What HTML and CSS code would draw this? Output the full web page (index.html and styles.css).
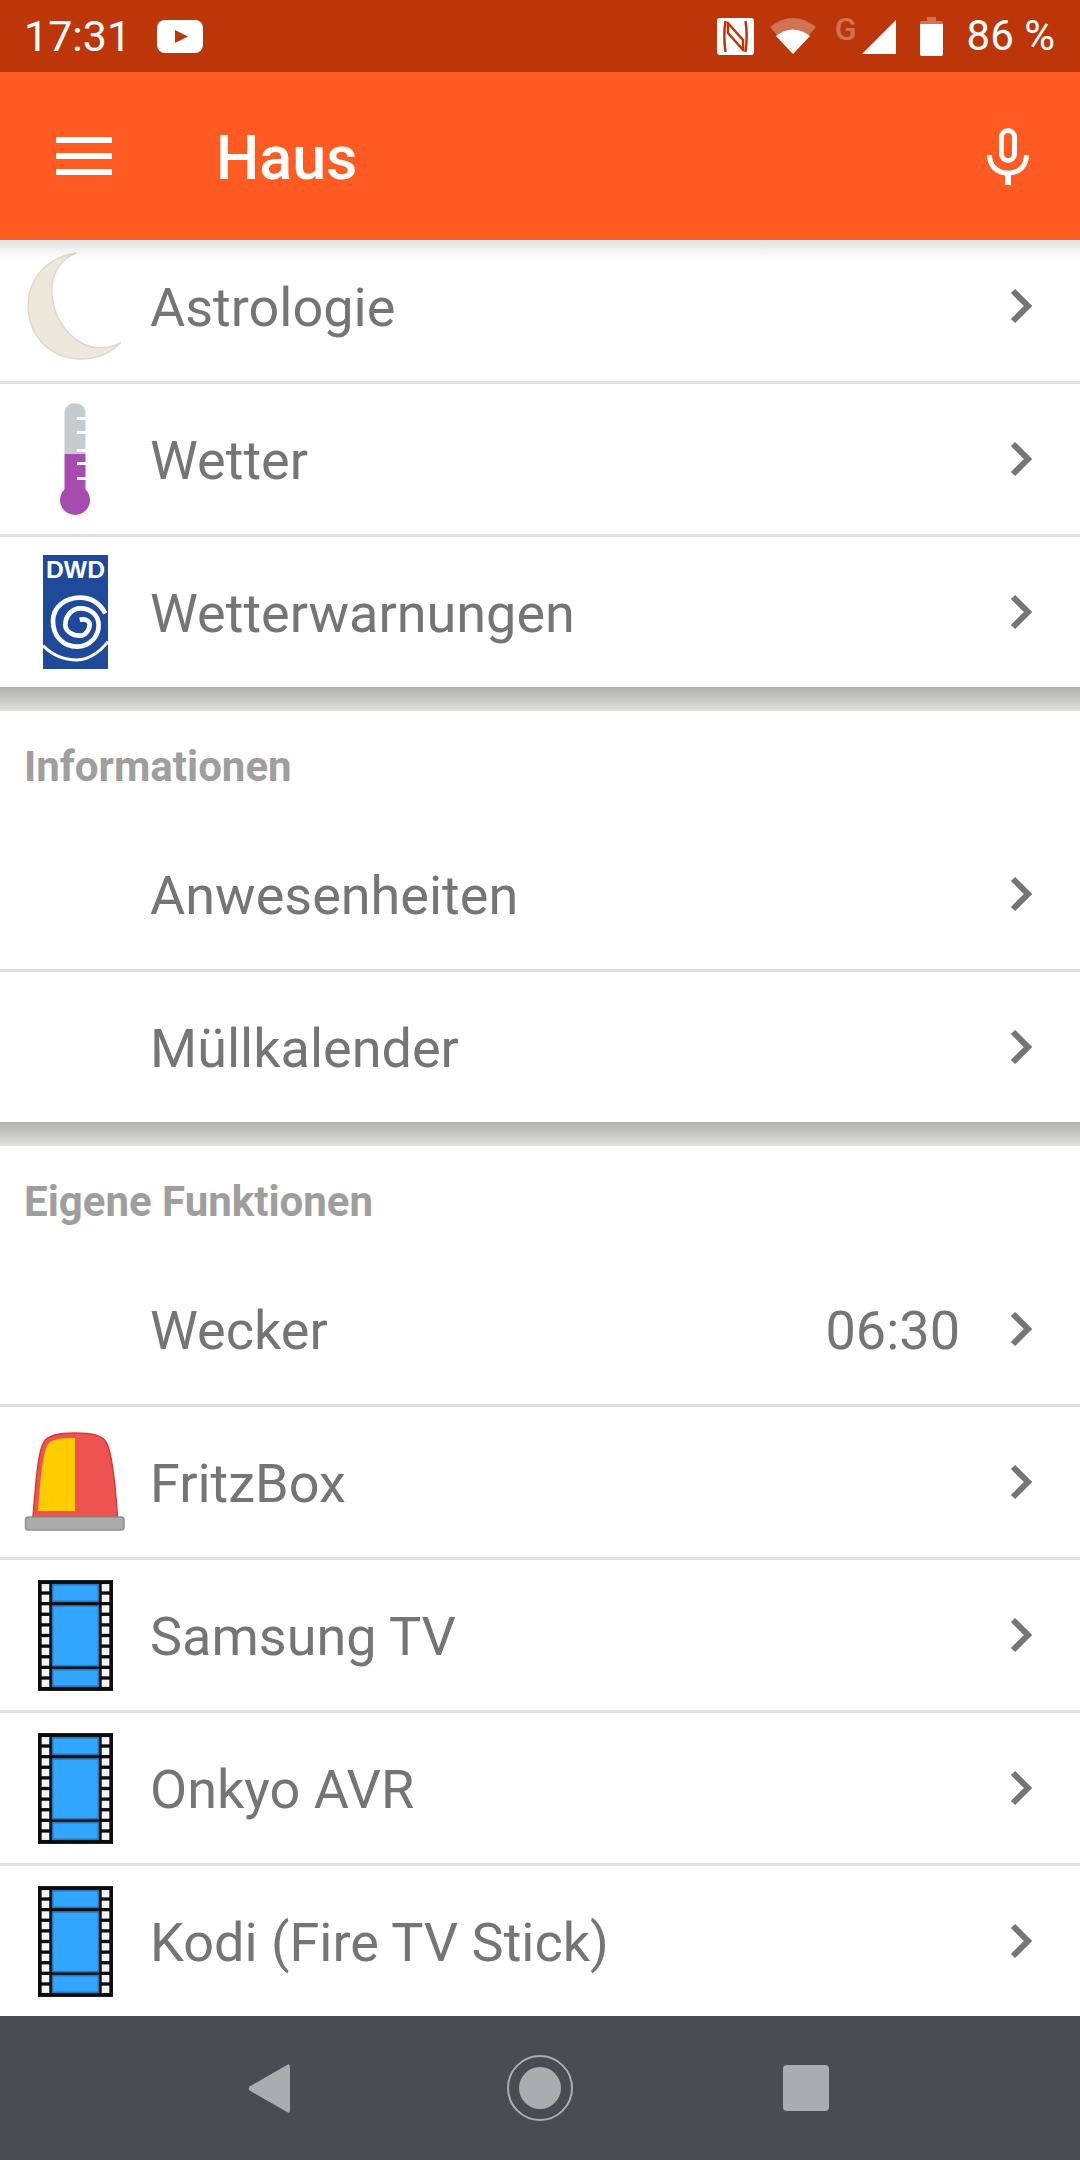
FILE: index.html
```html
<!DOCTYPE html>
<html lang="de">
<head>
    <meta charset="UTF-8">
    <meta name="viewport" content="width=device-width, initial-scale=1.0">
    <title>Haus</title>
    <link rel="stylesheet" href="styles.css">
</head>
<body>

<svg class="defs" width="0" height="0">
    <defs>
        <symbol id="chevron" viewBox="0 0 22 36">
            <path d="M3 3 L18 18 L3 33" fill="none" stroke="#757575" stroke-width="6"/>
        </symbol>
        <symbol id="film" viewBox="52 28 226 334">
            <rect x="52" y="28" width="226" height="334" fill="#0c0c0c"/>
            <g fill="#f4f4f4">
                <rect x="63" y="40" width="23" height="22"/><rect x="244" y="40" width="23" height="22"/>
                <rect x="63" y="72" width="23" height="22"/><rect x="244" y="72" width="23" height="22"/>
                <rect x="63" y="104" width="23" height="22"/><rect x="244" y="104" width="23" height="22"/>
                <rect x="63" y="136" width="23" height="22"/><rect x="244" y="136" width="23" height="22"/>
                <rect x="63" y="168" width="23" height="22"/><rect x="244" y="168" width="23" height="22"/>
                <rect x="63" y="200" width="23" height="22"/><rect x="244" y="200" width="23" height="22"/>
                <rect x="63" y="232" width="23" height="22"/><rect x="244" y="232" width="23" height="22"/>
                <rect x="63" y="264" width="23" height="22"/><rect x="244" y="264" width="23" height="22"/>
                <rect x="63" y="296" width="23" height="22"/><rect x="244" y="296" width="23" height="22"/>
                <rect x="63" y="328" width="23" height="22"/><rect x="244" y="328" width="23" height="22"/>
            </g>
            <g fill="#33a6ff" stroke="#2a78b8" stroke-width="5">
                <rect x="96" y="42" width="138" height="50"/>
                <rect x="96" y="106" width="138" height="180"/>
                <rect x="96" y="298" width="138" height="50"/>
            </g>
        </symbol>
    </defs>
</svg>

<div class="status-bar">
    <span class="status-text st-time">17:31</span>
    <svg class="st-youtube" viewBox="0 0 46 33" width="46" height="33">
        <rect width="46" height="33" rx="8" fill="#fff"/>
        <path d="M18 10 L31 16.500 L18 23 Z" fill="#bd360a"/>
    </svg>
    <div class="status-spacer"></div>
    <svg class="st-nfc" viewBox="0 0 37 37" width="37" height="37">
        <rect width="37" height="37" rx="3" fill="#fff"/>
        <path d="M8.500 3 C7 13 7 24 8.500 34 M28.500 3 C30 13 30 24 28.500 34" fill="none" stroke="#bd360a" stroke-width="2.500"/>
        <path d="M10 4 L26 22 L26 32 M27 33 L11 15 L11 5" fill="none" stroke="#bd360a" stroke-width="2.500"/>
    </svg>
    <svg class="st-wifi" viewBox="0 0 46 36" width="46" height="36">
        <path d="M0 9 Q23 -9 46 9 L23 36 Z" fill="#fff" opacity="0.3"/>
        <path d="M6 18 Q23 5 40 18 L24 35 Q23 36 22 35 Z" fill="#fff"/>
    </svg>
    <span class="st-g">G</span>
    <svg class="st-signal" viewBox="0 0 34 34" width="34" height="34">
        <path d="M0 34 L34 0 L34 34 Z" fill="#fff"/>
    </svg>
    <svg class="st-battery" viewBox="0 0 23 39" width="23" height="39">
        <path d="M7 0 H16 V4 H21 Q23 4 23 6 V12 H0 V6 Q0 4 2 4 H7 Z" fill="#fff" opacity="0.3"/>
        <path d="M0 7 H23 V37 Q23 39 21 39 H2 Q0 39 0 37 Z" fill="#fff"/>
    </svg>
    <span class="status-text st-percent">86 %</span>
</div>

<header class="toolbar">
    <div class="menu-icon"><span></span><span></span><span></span></div>
    <h1 class="toolbar-title">Haus</h1>
    <svg class="mic-icon" viewBox="0 0 42 57" width="42" height="57">
        <rect x="14.500" y="2.500" width="13" height="30" rx="6.500" fill="none" stroke="#fff" stroke-width="5"/>
        <path d="M2.500 27 C2.500 38 10 45 21 45 C32 45 39.500 38 39.500 27" fill="none" stroke="#fff" stroke-width="5"/>
        <rect x="18" y="45" width="6" height="12" fill="#fff"/>
    </svg>
</header>

<main class="content">
    <section class="group group-first">
        <div class="row">
            <div class="row-icon">
                <svg viewBox="24 250 100 112" width="103" height="112" preserveAspectRatio="none">
                    <path d="M75 253 C45 257 28 280 28 305 C28 337 50 359 80 359 C96 359 110 352 118 342 C108 349 92 350 80 343 C62 333 51 312 51 290 C51 274 60 258 75 253 Z" fill="#eee8dc" stroke="#ded9cd" stroke-width="1.500"/>
                </svg>
            </div>
            <span class="row-label">Astrologie</span>
            <svg class="chevron"><use href="#chevron"/></svg>
        </div>
        <div class="row">
            <div class="row-icon">
                <svg viewBox="0 0 32 114" width="32" height="114">
                    <path d="M5.500 11 C5.500 -2 26.500 -2 26.500 11 L26.500 52 L5.500 52 Z" fill="#c5cbce"/>
                    <path d="M5.500 52 L26.500 52 L26.500 90 L5.500 90 Z" fill="#a64bb0"/>
                    <circle cx="16" cy="98" r="15" fill="#a64bb0"/>
                    <g fill="#fff">
                        <rect x="18" y="15" width="9" height="3"/>
                        <rect x="18" y="29" width="9" height="3"/>
                        <rect x="18" y="47" width="9" height="3"/>
                        <rect x="18" y="60" width="9" height="3"/>
                        <rect x="18" y="75" width="9" height="3"/>
                    </g>
                </svg>
            </div>
            <span class="row-label">Wetter</span>
            <svg class="chevron"><use href="#chevron"/></svg>
        </div>
        <div class="row">
            <div class="row-icon">
                <svg viewBox="38 30 195 342" width="65" height="114">
                    <rect x="38" y="30" width="195" height="342" fill="#1f4a9c"/>
                    <text class="dwd-text" x="135.500" y="98" text-anchor="middle">DWD</text>
                    <path d="M225 205 C205 170 175 158 150 158 C105 158 68 185 68 228 C68 275 100 305 140 305 C178 305 205 275 205 240 C205 210 180 190 150 190 C125 190 105 212 105 240 C105 258 125 272 150 272 C165 272 178 255 178 238 C178 228 165 220 148 224" fill="none" stroke="#fff" stroke-width="14"/>
                    <path d="M38 302 C70 335 110 345 140 345 C175 345 210 320 233 290" fill="none" stroke="#fff" stroke-width="9"/>
                </svg>
            </div>
            <span class="row-label">Wetterwarnungen</span>
            <svg class="chevron"><use href="#chevron"/></svg>
        </div>
    </section>

    <div class="group-gap"></div>

    <section class="group">
        <h2 class="group-title">Informationen</h2>
        <div class="row">
            <div class="row-icon"></div>
            <span class="row-label">Anwesenheiten</span>
            <svg class="chevron"><use href="#chevron"/></svg>
        </div>
        <div class="row">
            <div class="row-icon"></div>
            <span class="row-label">Müllkalender</span>
            <svg class="chevron"><use href="#chevron"/></svg>
        </div>
    </section>

    <div class="group-gap"></div>

    <section class="group">
        <h2 class="group-title">Eigene Funktionen</h2>
        <div class="row">
            <div class="row-icon"></div>
            <span class="row-label">Wecker</span>
            <span class="row-value">06:30</span>
            <svg class="chevron"><use href="#chevron"/></svg>
        </div>
        <div class="row">
            <div class="row-icon">
                <svg viewBox="24 1430 102 102" width="102" height="102">
                    <path d="M33 1516 C36 1480 38 1450 44 1441 C48 1433 65 1432 75 1432 C85 1432 102 1433 106 1441 C112 1450 115 1480 117.500 1516 Z" fill="#ef5350" stroke="#d8383a" stroke-width="1.500"/>
                    <path d="M38 1510 C40 1485 42 1456 47 1445 C50 1438 60 1437 75 1437 V1510 Z" fill="#fc0"/>
                    <rect x="25.500" y="1516" width="98.500" height="13" rx="3" fill="#ababab" stroke="#8f8f8f" stroke-width="1.500"/>
                </svg>
            </div>
            <span class="row-label">FritzBox</span>
            <svg class="chevron"><use href="#chevron"/></svg>
        </div>
        <div class="row">
            <div class="row-icon"><svg class="film" width="75" height="111"><use href="#film"/></svg></div>
            <span class="row-label">Samsung TV</span>
            <svg class="chevron"><use href="#chevron"/></svg>
        </div>
        <div class="row">
            <div class="row-icon"><svg class="film" width="75" height="111"><use href="#film"/></svg></div>
            <span class="row-label">Onkyo AVR</span>
            <svg class="chevron"><use href="#chevron"/></svg>
        </div>
        <div class="row">
            <div class="row-icon"><svg class="film" width="75" height="111"><use href="#film"/></svg></div>
            <span class="row-label">Kodi (Fire TV Stick)</span>
            <svg class="chevron"><use href="#chevron"/></svg>
        </div>
    </section>
</main>

<nav class="nav-bar">
    <svg class="nav-back" viewBox="0 0 42 49" width="42" height="49">
        <path d="M39 1 Q42 -1 42 3 V46 Q42 50 39 48 L1.500 26.500 Q0 24.500 1.500 22.500 Z" fill="#a9adb0"/>
    </svg>
    <svg class="nav-home" viewBox="0 0 66 66" width="66" height="66">
        <circle cx="33" cy="33" r="32" fill="none" stroke="#a9adb0" stroke-width="2"/>
        <circle cx="33" cy="33" r="21" fill="#a9adb0"/>
    </svg>
    <svg class="nav-recent" viewBox="0 0 46 46" width="46" height="46">
        <rect width="46" height="46" rx="4" fill="#a9adb0"/>
    </svg>
</nav>

</body>
</html>
```

FILE: styles.css
```css
html, body {
    margin: 0;
    padding: 0;
}
body {
    width: 1080px;
    height: 2160px;
    display: flex;
    flex-direction: column;
    overflow: hidden;
    font-family: 'Roboto', Arial, sans-serif;
    background-color: #fff;
    color: #757575;
}
.defs {
    position: absolute;
}
.status-bar {
    height: 72px;
    flex-shrink: 0;
    display: flex;
    align-items: center;
    padding: 0 25px 0 24px;
    box-sizing: border-box;
    background-color: #bd360a;
    color: #fff;
}
.status-text {
    font-size: 42px;
    line-height: 72px;
}
.st-time {
    font-size: 43px;
}
.status-spacer {
    flex: 1;
}
.st-youtube {
    margin-left: 26px;
}
.st-nfc {
    margin-right: 1px;
}
.st-wifi {
    margin-left: 15px;
}
.st-g {
    margin-left: 19px;
    align-self: flex-start;
    margin-top: 11px;
    font-size: 32px;
    line-height: 36px;
    font-weight: 500;
    opacity: 0.3;
}
.st-signal {
    margin-left: 5px;
    margin-top: 2px;
}
.st-battery {
    margin-left: 24px;
}
.st-percent {
    margin-left: 24px;
}
.toolbar {
    position: relative;
    z-index: 2;
    height: 168px;
    flex-shrink: 0;
    display: flex;
    align-items: center;
    background-color: #ff5a22;
    color: #fff;
}
.toolbar::after {
    content: "";
    position: absolute;
    left: 0;
    right: 0;
    top: 100%;
    height: 18px;
    background: linear-gradient(rgba(0, 0, 0, 0.12), rgba(0, 0, 0, 0));
}
.menu-icon {
    width: 56px;
    margin-left: 56px;
    display: flex;
    flex-direction: column;
    gap: 10px;
}
.menu-icon span {
    display: block;
    height: 6px;
    background-color: #fff;
}
.toolbar-title {
    margin: 3px 0 0 104px;
    font-size: 61px;
    font-weight: 500;
}
.mic-icon {
    margin-left: auto;
    margin-right: 51px;
}
.content {
    flex: 1;
    min-height: 0;
    overflow: hidden;
}
.group-first {
    margin-top: -9px;
}
.group-gap {
    height: 24px;
    background: linear-gradient(#b0b0af, #e0e0df);
}
.group-title {
    height: 108px;
    margin: 0;
    padding-left: 24px;
    font-size: 42px;
    line-height: 111px;
    font-weight: 700;
    color: #9e9e9e;
}
.row {
    height: 150px;
    display: flex;
    align-items: center;
}
.row + .row {
    border-top: 3px solid #e0e0e0;
}
.row-icon {
    width: 150px;
    flex-shrink: 0;
    display: flex;
    justify-content: center;
    align-items: center;
}
.row-label {
    flex: 1;
    padding-top: 2px;
    font-size: 54px;
}
.row-value {
    padding-top: 2px;
    font-size: 54px;
    margin-right: 50px;
}
.chevron {
    width: 22px;
    height: 36px;
    margin-right: 48px;
    flex-shrink: 0;
}
.dwd-text {
    font-family: 'Liberation Sans', Arial, sans-serif;
    font-size: 74px;
    font-weight: 700;
    fill: #fff;
}
.nav-bar {
    height: 144px;
    flex-shrink: 0;
    display: flex;
    align-items: center;
    padding-left: 248px;
    background-color: #474d52;
}
.nav-home {
    margin-left: 217px;
}
.nav-recent {
    margin-left: 210px;
}
```
